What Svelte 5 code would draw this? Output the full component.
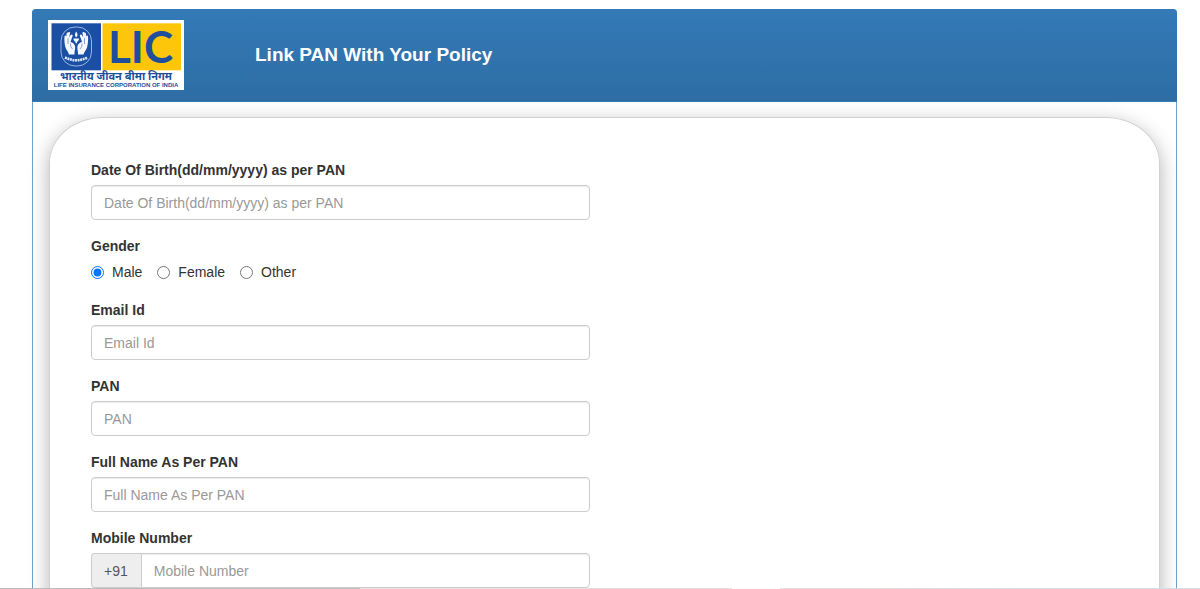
<script>
    let form = $state({
        dob: '',
        gender: 'male',
        email: '',
        pan: '',
        name: '',
        mobile: ''
    });

    const genders = [
        { value: 'male', label: 'Male' },
        { value: 'female', label: 'Female' },
        { value: 'other', label: 'Other' }
    ];
</script>

{#snippet field(key, label, type = 'text')}
    <div class="form-group">
        <label class="title" for={key}>{label}</label>
        <input class="form-control" id={key} {type} placeholder={label} bind:value={form[key]} />
    </div>
{/snippet}

{#snippet hand()}
    <path d="M20.300 12.500c.9-.9 1.900-.4 1.700.8l-.8 4.300c1-2.400 2-3.400 3-2.900.9.5.3 1.700-.2 2.900l-1.500 4.400c2.200.3 4.200 2 4.600 4.600.3 2.800-.8 4.800-.6 8h-5.600c-.3-3-2.700-4.300-3.500-7.400-.9-3.400-1.200-7.200-.9-10.600.1-1.400 1.500-1.500 1.700-.2l.4-3c.2-.7 1-.9 1.700-.9z" />
    <path d="M20 18v6m2.600-.5c-.4 2.200.4 4 2 5.500" fill="none" stroke="#1a4fa3" stroke-width=".5" />
{/snippet}

<div class="page">
    <main class="panel">
        <header class="panel-heading">
            <svg class="logo" viewBox="0 0 136 70" role="img" aria-label="LIC">
                <rect width="136" height="70" fill="#fff" />
                <rect x="3.5" y="3.3" width="49.5" height="47" fill="#1a4fa3" />
                <rect x="54.5" y="3.3" width="78.5" height="47" fill="#fdc60b" />
                <!-- lamp held between two hands -->
                <rect x="13" y="7" width="30.500" height="39" rx="14" fill="none" stroke="#a9c2e6" stroke-width=".9" />
                <g fill="#f4f8ff">
                    <g>{@render hand()}</g>
                    <g transform="matrix(-1 0 0 1 56.500 0)">{@render hand()}</g>
                    <path d="M28.250 11.500c1.700 2.500 1.700 4.600 0 5.800-1.700-1.200-1.700-3.300 0-5.800z" />
                    <path d="M25.400 18.500h5.700c-.4 2.200-1.200 3-2.100 3.200v1.600h-1.500v-1.600c-.9-.2-1.700-1-2.100-3.200z" />
                </g>
                <path d="M17 37.500q11.300 5.500 22.500 0" fill="none" stroke="#dce8f8" stroke-width="2.600" stroke-dasharray="2 .6" />
                <text class="mark" x="60" y="43">LIC</text>
                <text class="hindi" x="68" y="60">भारतीय जीवन बीमा निगम</text>
                <text class="english" x="68" y="67">LIFE INSURANCE CORPORATION OF INDIA</text>
            </svg>
            <h1>Link PAN With Your Policy</h1>
        </header>

        <div class="panel-body">
            <form class="card">
                <div class="column">
                    {@render field('dob', 'Date Of Birth(dd/mm/yyyy) as per PAN')}

                    <fieldset class="form-group">
                        <legend class="title">Gender</legend>
                        <div class="radios">
                            {#each genders as gender}
                                <label>
                                    <input type="radio" name="gender" value={gender.value} bind:group={form.gender} />
                                    {gender.label}
                                </label>
                            {/each}
                        </div>
                    </fieldset>

                    {@render field('email', 'Email Id', 'email')}
                    {@render field('pan', 'PAN')}
                    {@render field('name', 'Full Name As Per PAN')}

                    <div class="form-group">
                        <label class="title" for="mobile">Mobile Number</label>
                        <div class="input-group">
                            <span class="addon">+91</span>
                            <input class="form-control" id="mobile" type="tel" placeholder="Mobile Number" bind:value={form.mobile} />
                        </div>
                    </div>
                </div>
            </form>
        </div>
    </main>
    <div class="strip"></div>
</div>

<style>
    :global(body) {
        margin: 0;
        background: #fff;
    }

    .page {
        box-sizing: border-box;
        height: 100vh;
        overflow: hidden;
        padding: 9px 23px 0 32px;
        font-family: 'Liberation Sans', Arial, sans-serif;
        font-size: 14px;
        line-height: 21px;
        color: #333;
    }
    .page * {
        box-sizing: border-box;
    }
    .panel {
        border: 1px solid #6fa3cc;
        border-radius: 4px;
    }
    .panel-heading {
        display: flex;
        margin: -1px -1px 0;
        padding: 11px 16px;
        border-bottom: 1px solid #337ab7;
        border-radius: 4px 4px 0 0;
        background: linear-gradient(#337ab7, #2e6da4);
        color: #fff;
    }
    .logo {
        flex: none;
        width: 136px;
        height: 70px;
    }
    .mark {
        font: bold 44px Lato, 'Liberation Sans', sans-serif;
        fill: #1f4f9c;
    }
    .hindi {
        font: bold 11px 'Noto Sans', 'Noto Sans Devanagari', sans-serif;
        fill: #1f4f9c;
        text-anchor: middle;
    }
    .english {
        font: bold 6px 'Liberation Sans', Arial, sans-serif;
        fill: #1f4f9c;
        text-anchor: middle;
    }
    h1 {
        margin: 23px 0 0 71px;
        font-size: 19px;
        line-height: 24px;
    }

    .panel-body {
        padding: 15px 16px;
    }
    .card {
        padding: 41px 26px 60px;
        border: 1px solid #d0d0d0;
        border-radius: 54px / 46px;
        box-shadow: 0 6px 20px rgba(0, 0, 0, 0.3);
    }
    .column {
        width: 50%;
        padding: 0 15px;
    }
    .form-group {
        margin: 0 0 15px;
        padding: 0;
        border: 0;
    }
    .title {
        display: block;
        margin-bottom: 4px;
        padding: 0;
        font-weight: bold;
        line-height: 22px;
    }
    .form-control {
        display: block;
        width: 100%;
        height: 35px;
        padding: 6px 12px;
        border: 1px solid #ccc;
        border-radius: 4px;
        background: #fff;
        box-shadow: inset 0 1px 1px rgba(0, 0, 0, 0.075);
        font: inherit;
        color: #555;
    }
    .form-control::placeholder {
        color: #999;
        opacity: 1;
    }
    .radios {
        display: flex;
        gap: 15px;
        height: 23px;
        align-items: center;
    }
    .radios label {
        display: flex;
        gap: 8px;
        align-items: center;
    }
    .radios input {
        width: 13px;
        height: 13px;
        margin: 0;
    }
    .input-group {
        display: flex;
    }
    .addon {
        padding: 7px 13px 5px 12px;
        border: 1px solid #ccc;
        border-right: 0;
        border-radius: 4px 0 0 4px;
        background: #eee;
        color: #555;
    }
    .input-group .form-control {
        flex: 1;
        border-radius: 0 4px 4px 0;
    }

    .strip {
        position: fixed;
        right: 0;
        bottom: 0;
        left: 0;
        height: 1px;
        background: linear-gradient(90deg, #bbb 0 30%, #ecdcdc 30% 61%, #fafafa 61% 65%, #ecdcdc 65% 72%, #d3e0ea 85%);
    }
</style>
